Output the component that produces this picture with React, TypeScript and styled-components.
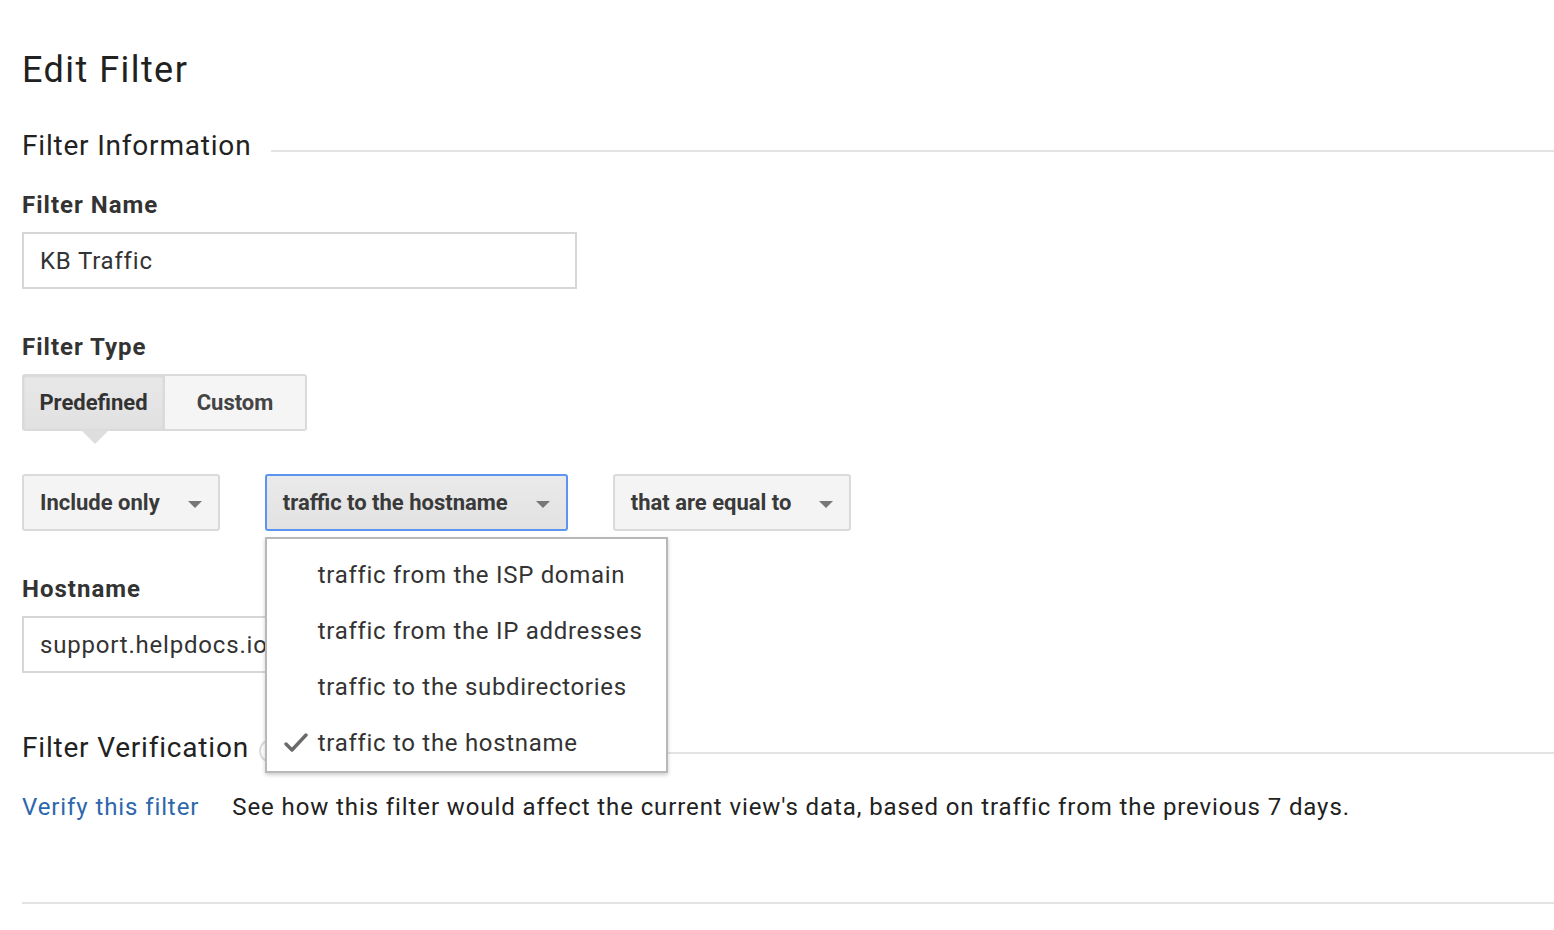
import React from "react";
import styled, { createGlobalStyle } from "styled-components";

const Global = createGlobalStyle`
  html, body { margin: 0; padding: 0; background: #fff; }
  body { font-family: Roboto, "Noto Sans", "Liberation Sans", sans-serif; color: #222; }
  * { box-sizing: border-box; }
`;

const Page = styled.div`
  padding: 48px 0 0 22px;
  width: 1554px;
  overflow: hidden;
`;

const Title = styled.h1`
  margin: 0;
  font-size: 36px;
  line-height: 44px;
  font-weight: 400;
  letter-spacing: 1.45px;
  color: #212121;
`;

const SectionHeader = styled.div<{ $top: number }>`
  display: flex;
  align-items: center;
  margin-top: ${(p) => p.$top}px;
  height: 36px;
`;

const SectionTitle = styled.h2`
  margin: 0;
  font-size: 28px;
  line-height: 36px;
  font-weight: 400;
  letter-spacing: 0.8px;
  color: #222;
  white-space: nowrap;
`;

const SectionLine = styled.div`
  flex: 1;
  height: 2px;
  background: #e3e3e3;
  margin-left: 20px;
  margin-top: 10px;
`;

const HelpIcon = styled.span`
  display: inline-block;
  width: 24px;
  height: 24px;
  border-radius: 50%;
  border: 2px solid #dcdcdc;
  margin-left: 10px;
  margin-top: 6px;
  flex: none;
`;

const Label = styled.div<{ $top: number }>`
  margin-top: ${(p) => p.$top}px;
  font-size: 24px;
  line-height: 30px;
  font-weight: 700;
  letter-spacing: 1px;
  color: #333;
`;

const TextInput = styled.div`
  margin-top: 12px;
  width: 555px;
  height: 57px;
  border: 2px solid #d6d6d6;
  padding: 0 16px;
  display: flex;
  align-items: center;
  font-size: 24px;
  letter-spacing: 0.8px;
  color: #333;
  white-space: nowrap;
  overflow: hidden;
`;

const Toggle = styled.div`
  margin-top: 12px;
  display: flex;
  position: relative;
  width: max-content;
`;

const ToggleButton = styled.div<{ $active?: boolean; $first?: boolean }>`
  position: relative;
  width: ${(p) => (p.$first ? 143 : 142)}px;
  height: 57px;
  display: flex;
  align-items: center;
  justify-content: center;
  font-size: 22px;
  font-weight: 700;
  color: ${(p) => (p.$active ? "#333" : "#444")};
  border: 2px solid #dadada;
  border-left-width: ${(p) => (p.$first ? 2 : 0)}px;
  border-radius: ${(p) => (p.$first ? "3px 0 0 3px" : "0 3px 3px 0")};
  background: ${(p) =>
    p.$active ? "linear-gradient(#e8e8e8, #e1e1e1)" : "#f5f5f5"};
  box-shadow: ${(p) => (p.$active ? "inset 0 1px 2px rgba(0,0,0,0.08)" : "none")};
`;

const Pointer = styled.span`
  position: absolute;
  left: 57px;
  bottom: -15px;
  width: 0;
  height: 0;
  border-left: 14px solid transparent;
  border-right: 14px solid transparent;
  border-top: 14px solid #dedede;
`;

const SelectRow = styled.div`
  margin-top: 43px;
  display: flex;
  gap: 45px;
`;

const SelectWrap = styled.div`
  position: relative;
`;

const SelectBox = styled.div<{ $open?: boolean }>`
  height: 57px;
  display: flex;
  align-items: center;
  gap: 28px;
  padding: 0 16px 0 16px;
  font-size: 22px;
  font-weight: 700;
  color: #3a3a3a;
  border: 2px solid ${(p) => (p.$open ? "#5b95f0" : "#dadada")};
  border-radius: 3px;
  background: ${(p) => (p.$open ? "linear-gradient(#eaeaea, #e2e2e2)" : "#f4f4f4")};
  white-space: nowrap;
`;

const Arrow = styled.span`
  width: 0;
  height: 0;
  border-left: 7px solid transparent;
  border-right: 7px solid transparent;
  border-top: 7px solid #777;
  margin-top: 4px;
`;

const Menu = styled.ul`
  position: absolute;
  left: 0;
  top: 63px;
  width: 403px;
  margin: 0;
  padding: 8px 0 0;
  list-style: none;
  background: #fff;
  border: 2px solid #b8b8b8;
  box-shadow: 0 2px 4px rgba(0, 0, 0, 0.2);
  z-index: 10;
`;

const MenuItem = styled.li`
  position: relative;
  height: 56px;
  display: flex;
  align-items: center;
  padding-left: 51px;
  font-size: 24px;
  letter-spacing: 0.7px;
  color: #333;
  white-space: nowrap;
`;

const Check = styled.svg`
  position: absolute;
  left: 17px;
  top: 17px;
`;

const VerifyRow = styled.div`
  margin-top: 26px;
  display: flex;
  gap: 33px;
  font-size: 24px;
  line-height: 30px;
  letter-spacing: 0.9px;
  white-space: nowrap;
`;

const Link = styled.a`
  color: #2d67ab;
  text-decoration: none;
`;

const Description = styled.span`
  color: #222;
`;

const BottomLine = styled.div`
  margin-top: 80px;
  height: 2px;
  background: #e3e3e3;
`;

const menuItems = [
  "traffic from the ISP domain",
  "traffic from the IP addresses",
  "traffic to the subdirectories",
  "traffic to the hostname",
];

export default function App() {
  return (
    <>
      <Global />
      <Page>
        <Title>Edit Filter</Title>
        <SectionHeader $top={36}>
          <SectionTitle>Filter Information</SectionTitle>
          <SectionLine />
        </SectionHeader>

        <Label $top={26}>Filter Name</Label>
        <TextInput>KB Traffic</TextInput>

        <Label $top={43}>Filter Type</Label>
        <Toggle>
          <ToggleButton $active $first>
            Predefined
            <Pointer />
          </ToggleButton>
          <ToggleButton>Custom</ToggleButton>
        </Toggle>

        <SelectRow>
          <SelectWrap>
            <SelectBox>
              Include only
              <Arrow />
            </SelectBox>
          </SelectWrap>
          <SelectWrap>
            <SelectBox $open>
              traffic to the hostname
              <Arrow />
            </SelectBox>
            <Menu>
              {menuItems.map((item, i) => (
                <MenuItem key={item}>
                  {i === menuItems.length - 1 && (
                    <Check width="24" height="22" viewBox="0 0 24 22">
                      <path
                        d="M2 12 L8 18 L22 3"
                        fill="none"
                        stroke="#6a6a6a"
                        strokeWidth="3.4"
                        strokeLinecap="round"
                        strokeLinejoin="round"
                      />
                    </Check>
                  )}
                  {item}
                </MenuItem>
              ))}
            </Menu>
          </SelectWrap>
          <SelectWrap>
            <SelectBox>
              that are equal to
              <Arrow />
            </SelectBox>
          </SelectWrap>
        </SelectRow>

        <Label $top={43}>Hostname</Label>
        <TextInput>support.helpdocs.io</TextInput>

        <SectionHeader $top={57}>
          <SectionTitle>Filter Verification</SectionTitle>
          <HelpIcon />
          <SectionLine />
        </SectionHeader>

        <VerifyRow>
          <Link href="#">Verify this filter</Link>
          <Description>
            See how this filter would affect the current view's data, based on traffic from the previous 7 days.
          </Description>
        </VerifyRow>

        <BottomLine />
      </Page>
    </>
  );
}
